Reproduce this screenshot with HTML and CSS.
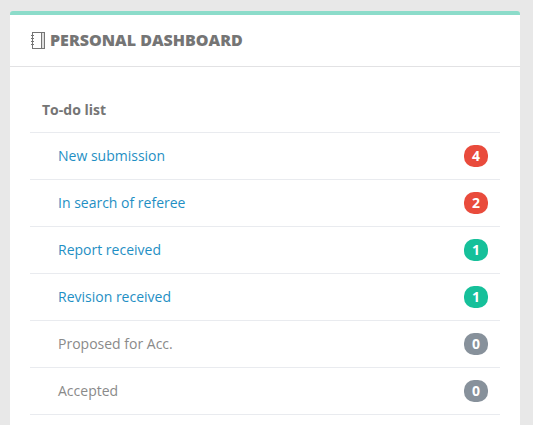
FILE: index.html
```html
<!DOCTYPE html>
<html lang="en">
<head>
  <meta charset="UTF-8" />
  <title>Personal Dashboard</title>
  <link rel="stylesheet" href="styles.css">
</head>
<body>

  <div class="card">
    <div class="card-head">
      <svg class="head-icon" width="15" height="18" viewBox="0 0 15 18" fill="none" stroke="#757575" stroke-width="1">
        <rect x="1.5" y="0.5" width="12" height="16" />
        <path d="M10.5 0.5v16" />
        <path d="M12 1v15" stroke="#bdbdbd" />
        <path d="M0 3.5h3M0 6.5h3M0 9.5h3M0 12.5h3" />
      </svg>
      <h2>PERSONAL DASHBOARD</h2>
    </div>

    <div class="card-body">
      <div class="list-title">To-do list</div>
      <ul class="todo">
        <li><a href="#">New submission</a><span class="badge red">4</span></li>
        <li><a href="#">In search of referee</a><span class="badge red">2</span></li>
        <li><a href="#">Report received</a><span class="badge green">1</span></li>
        <li><a href="#">Revision received</a><span class="badge green">1</span></li>
        <li><span class="muted">Proposed for Acc.</span><span class="badge grey">0</span></li>
        <li><span class="muted">Accepted</span><span class="badge grey">0</span></li>
      </ul>
    </div>
  </div>

</body>
</html>
```

FILE: styles.css
```css
html, body {
  height: 425px;
  overflow: hidden;
}
body {
  margin: 0;
  padding: 11px 13px 0 10px;
  background-color: #e8e8e8;
  font-family: 'Open Sans', sans-serif;
  font-size: 14px;
  color: #757575;
}
.card {
  height: 414px;
  background-color: #fff;
  border-top: 4px solid #8cdcca;
  border-radius: 3px 3px 0 0;
}
.card-head {
  display: flex;
  align-items: center;
  height: 51px;
  padding-left: 21px;
  border-bottom: 1px solid #e2e2e4;
}
.head-icon {
  margin-right: 4px;
}
.card-head h2 {
  margin: 0 0 1px;
  font-size: 16px;
  font-weight: 800;
  color: #757575;
}
.card-body {
  padding: 0 20px;
}
.list-title {
  height: 65px;
  line-height: 86px;
  padding-left: 12px;
  font-weight: 700;
  border-bottom: 1px solid #e9ebef;
}
.todo {
  list-style: none;
  margin: 0;
  padding: 0;
}
.todo li {
  display: flex;
  align-items: center;
  justify-content: space-between;
  height: 46px;
  padding: 0 12px 0 28px;
  border-bottom: 1px solid #e9ebef;
}
.todo a {
  margin-bottom: 2px;
  color: #1f8fc4;
  text-decoration: none;
}
.muted {
  margin-bottom: 2px;
  color: #8a8a8a;
}
.badge {
  width: 24px;
  height: 22px;
  line-height: 22px;
  border-radius: 10px;
  text-align: center;
  font-size: 14px;
  font-weight: 700;
  color: #fff;
}
.red { background-color: #e94b3c; }
.green { background-color: #16c09a; }
.grey { background-color: #87919b; }
```
